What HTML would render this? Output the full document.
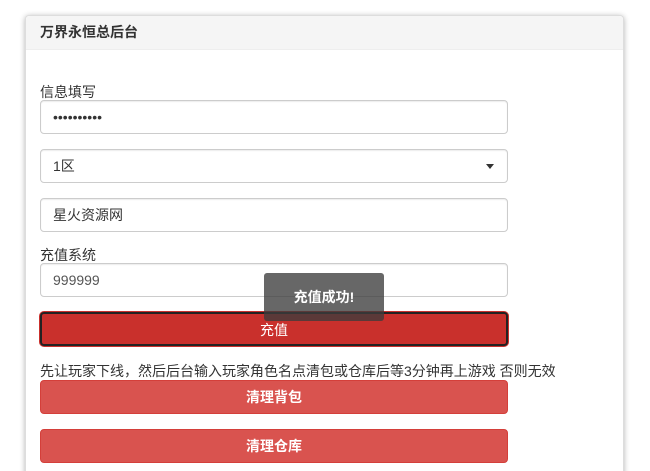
<!DOCTYPE html><html><head><meta charset="utf-8"><style>
html,body{margin:0;width:650px;height:471px;overflow:hidden}
body{background:#fff;font-family:"Liberation Sans","Noto Sans CJK SC",sans-serif;font-size:14px;color:#333;position:relative}
.panel{position:absolute;left:25px;top:15px;width:597px;height:470px;border:1px solid #ddd;border-bottom:0;border-radius:4px;box-shadow:0 1px 6px rgba(0,0,0,.3);background:#fff}
.hd{height:33px;background:#f5f5f5;border-bottom:1px solid #eee;font-weight:bold;line-height:33px;padding-left:14px;font-size:14px;border-radius:4px 4px 0 0}
.a{position:absolute;left:40px}
.in{height:32px;border:1px solid #ccc;border-radius:4px;line-height:32px;padding-left:12px;width:454px;background:#fff;box-shadow:inset 0 1px 1px rgba(0,0,0,.075)}
.lb{line-height:18px}
.btn{width:468px;height:34px;border-radius:4px;color:#fff;text-align:center;line-height:32px;background:#d9534f;box-sizing:border-box;border:1px solid #d43f3a;font-weight:bold}
.toast{position:absolute;left:264px;top:273px;width:120px;height:48px;background:rgba(60,60,60,.78);color:#fff;text-align:center;line-height:48px;border-radius:3px;font-weight:bold}
</style></head><body>
<div class="panel"><div class="hd">万界永恒总后台</div></div>
<div class="a lb" style="top:83px">信息填写</div>
<div class="a in" style="top:100px">••••••••••</div>
<div class="a in" style="top:149px">1区<span style="position:absolute;right:13px;top:14px;border:4px solid transparent;border-top:5px solid #333;border-bottom:0"></span></div>
<div class="a in" style="top:198px">星火资源网</div>
<div class="a lb" style="top:246px">充值系统</div>
<div class="a in" style="top:263px;color:#555">999999</div>
<div class="a btn" style="top:312px;background:#c9302c;border:2px solid #222;box-shadow:0 0 0 1px #c9302c;font-weight:normal">充值</div>
<div class="a lb" style="top:362px">先让玩家下线，然后后台输入玩家角色名点清包或仓库后等3分钟再上游戏 否则无效</div>
<div class="a btn" style="top:380px">清理背包</div>
<div class="a btn" style="top:429px">清理仓库</div>
<div class="toast">充值成功!</div>
</body></html>
